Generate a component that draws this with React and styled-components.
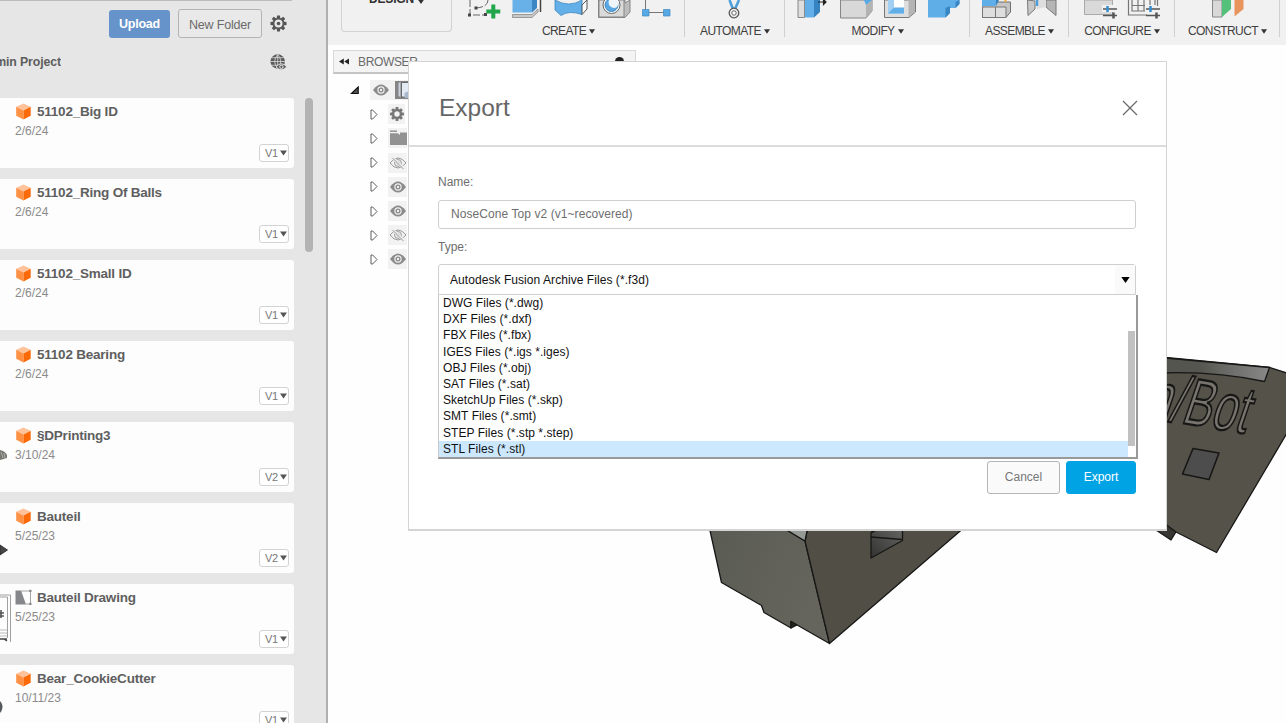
import React from "react";
import styled, { createGlobalStyle, css } from "styled-components";

const Global = createGlobalStyle`
  *, *::before, *::after { box-sizing: border-box; }
  html, body { margin: 0; padding: 0; background: #fff; overflow: hidden; }
  body { font-family: "Liberation Sans", Arial, sans-serif; font-size: 12px; }
  button, input { font-family: inherit; }
  svg { display: block; }
`;

const Screen = styled.div`
  display: flex;
  position: relative;
  width: 1286px;
  height: 723px;
  overflow: hidden;
  background: #fefefe;
`;

/* ---------- data panel ---------- */

const DataPanel = styled.aside`
  flex: none;
  width: 328px;
  height: 723px;
  overflow: hidden;
  background: #e6e6e6;
  border-right: 2px solid #b0b0b0;
`;

const TopEdge = styled.div`
  width: 292px;
  height: 1px;
  background: #bcbcbc;
`;

const PanelToolbar = styled.div`
  display: flex;
  align-items: center;
  justify-content: flex-end;
  gap: 8px;
  height: 29px;
  margin: 8px 39px 0 0;
`;

const UploadButton = styled.button`
  width: 61px;
  height: 28px;
  padding: 1px 0 0;
  border: 0;
  border-radius: 3px;
  background: #6694ca;
  color: #fff;
  font-size: 12.5px;
  font-weight: 700;
  letter-spacing: -0.25px;
`;

const FolderButton = styled.button`
  width: 84px;
  height: 29px;
  padding: 2px 0 0;
  border: 1px solid #b4b4b4;
  border-radius: 3px;
  background: #e9e9e9;
  color: #6b6b6b;
  font-size: 12.5px;
  letter-spacing: -0.2px;
`;

const ProjectRow = styled.div`
  display: flex;
  align-items: center;
  justify-content: space-between;
  height: 20px;
  margin: 14px 39px 26px 0;
`;

const ProjectName = styled.div`
  display: flex;
  justify-content: flex-end;
  width: 61px;
  overflow: hidden;
  white-space: nowrap;
  color: #5d5d5d;
  font-size: 12.3px;
  font-weight: 700;
  letter-spacing: -0.1px;
`;

const FileArea = styled.div`
  display: flex;
  gap: 11px;
`;

const FileList = styled.div`
  display: flex;
  flex-direction: column;
  gap: 11px;
  width: 294px;
`;

const PanelScroll = styled.div`
  width: 8px;
  height: 154px;
  border-radius: 4px;
  background: #b3b3b3;
`;

const Card = styled.article`
  display: flex;
  flex: none;
  height: 70px;
  border-radius: 0 3px 3px 0;
  background: #fdfdfd;
`;

const Thumb = styled.div`
  flex: none;
  width: 15px;
  height: 70px;
`;

const CardBody = styled.div`
  display: flex;
  flex: 1;
  flex-direction: column;
  padding-top: 5px;
`;

const CardTitle = styled.div`
  display: flex;
  align-items: center;
  gap: 5px;
  height: 17px;
  color: #5f5f5f;
  font-size: 13.5px;
  font-weight: 700;
  letter-spacing: -0.22px;
  white-space: nowrap;
`;

const CardDate = styled.div`
  height: 24px;
  padding-top: 4px;
  color: #8b8b8b;
  font-size: 12px;
  line-height: 14px;
`;

const Version = styled.div`
  display: flex;
  align-items: center;
  align-self: flex-end;
  gap: 2px;
  width: 30px;
  height: 18px;
  margin-right: 5px;
  padding-left: 5px;
  border: 1px solid #d3d3d3;
  border-radius: 3px;
  background: #fff;
  color: #777;
  font-size: 11px;
  letter-spacing: -0.4px;
`;

/* ---------- workspace ---------- */

const Workspace = styled.main`
  display: flex;
  flex: 1;
  flex-direction: column;
  min-width: 0;
`;

const Ribbon = styled.header`
  display: flex;
  flex: none;
  height: 45px;
  background: #f1f1f1;
`;

const DesignMenu = styled.div`
  display: flex;
  flex: none;
  justify-content: center;
  gap: 4px;
  width: 111px;
  height: 32px;
  margin-left: 13px;
  border: 1px solid #d2d2d2;
  border-top: 0;
  border-radius: 0 0 4px 4px;
  color: #333;
  font-size: 12px;
  font-weight: 700;
  line-height: 14px;
  letter-spacing: -0.2px;
`;

const DesignLabel = styled.span`
  margin-top: -8px;
`;

const Group = styled.section`
  position: relative;
  flex: none;
  width: ${(p) => p.$w}px;
  height: 45px;

  &::after {
    content: "";
    position: absolute;
    top: 0;
    right: 0;
    width: 1px;
    height: 37px;
    background: #d0d0d0;
  }
`;

const GroupLabel = styled.div`
  display: flex;
  align-items: center;
  justify-content: center;
  gap: 3px;
  height: 14px;
  margin-top: 3px;
  color: #3f3f3f;
  font-size: 12px;
  letter-spacing: -0.6px;
`;

const Canvas = styled.div`
  position: relative;
  flex: 1;
  padding: 5px 0 0 5px;
`;

const ModelView = styled.div`
  position: absolute;
  right: 0;
  bottom: 0;
`;

const BrowserBar = styled.div`
  display: flex;
  align-items: center;
  gap: 9px;
  width: 303px;
  height: 24px;
  padding: 0 11px 0 5px;
  border: 1px solid #d8d8d8;
  border-bottom: 2px solid #c4c4c4;
  background: #f4f4f4;
  color: #6a6a6a;
  font-size: 12px;
  letter-spacing: -0.35px;
`;

const BarDot = styled.span`
  width: 9px;
  height: 9px;
  margin-left: auto;
  border-radius: 50%;
  background: #222;
`;

const Tree = styled.div`
  display: flex;
  flex-direction: column;
  padding-top: 4px;
`;

const TreeRow = styled.div`
  display: flex;
  align-items: center;
  height: 24.2px;
  padding-left: ${(p) => (p.$root ? 17 : 37)}px;
`;

const Expander = styled.div`
  flex: none;
  width: ${(p) => (p.$root ? 20 : 18)}px;
`;

const IconCell = styled.div`
  display: flex;
  align-items: center;
  gap: 5px;
  height: 20px;
  padding-left: ${(p) => (p.$root ? 2 : 1)}px;
  background: #f2f2f2;
`;

/* ---------- export dialog ---------- */

const Dialog = styled.div`
  position: absolute;
  left: 408px;
  top: 61px;
  width: 759px;
  height: 470px;
  border: 1px solid #d4d4d4;
  border-width: 1px 1px 2px 1px;
  background: #fff;
`;

const DialogHeader = styled.div`
  display: flex;
  align-items: center;
  justify-content: space-between;
  height: 85px;
  padding: 9px 28px 0 30px;
  border-bottom: 2px solid #dcdcdc;
`;

const DialogTitle = styled.h1`
  margin: 0;
  color: #666;
  font-size: 24.5px;
  font-weight: 400;
  line-height: 28px;
`;

const DialogBody = styled.div`
  position: relative;
  display: flex;
  flex-direction: column;
  padding: 27px 30px 0 29px;
`;

const Label = styled.label`
  height: 16px;
  margin-bottom: ${(p) => p.$gap}px;
  color: #6e6e6e;
  font-size: 12px;
  line-height: 16px;
`;

const boxed = css`
  border: 1px solid #cfcfcf;
  border-radius: 3px;
  background: #fff;
`;

const NameInput = styled.input`
  ${boxed}
  height: 29px;
  margin-bottom: 10px;
  padding: 0 12px 1px;
  outline: 0;
  color: #6e6e6e;
  font-size: 12px;
  letter-spacing: 0.07px;
`;

const Select = styled.div`
  ${boxed}
  display: flex;
  align-items: stretch;
  justify-content: space-between;
  height: 31px;
  padding-left: 11px;
  border-radius: 3px 3px 0 0;
  color: #111;
  font-size: 12px;
  line-height: 30px;
  letter-spacing: 0.06px;
`;

const SelectArrow = styled.div`
  display: flex;
  align-items: center;
  justify-content: center;
  width: 20px;
  background: #fafafa;
`;

const Options = styled.div`
  position: absolute;
  left: 29px;
  top: 148px;
  display: flex;
  width: 700px;
  height: 164px;
  border: 1px solid #c9c9c9;
  border-top: 0;
  border-right: 2px solid #999;
  border-bottom: 2px solid #999;
  background: #fff;
`;

const OptionList = styled.div`
  flex: 1;
`;

const Option = styled.div`
  height: 16.2px;
  padding-left: 4px;
  background: ${(p) => (p.$active ? "#cce8ff" : "transparent")};
  color: #111;
  font-size: 12px;
  line-height: 16px;
  letter-spacing: 0.05px;
`;

const OptionsScroll = styled.div`
  width: 7px;
  height: 115px;
  margin: 36px 1px 0 0;
  background: #c1c1c1;
`;

const Actions = styled.div`
  display: flex;
  justify-content: flex-end;
  gap: 6px;
  margin-top: 166px;
`;

const Button = styled.button`
  width: ${(p) => (p.$primary ? 70 : 73)}px;
  height: 33px;
  padding: 0 0 1px;
  border: 1px solid ${(p) => (p.$primary ? "#00a3e4" : "#b5b5b5")};
  border-radius: 3px;
  background: ${(p) => (p.$primary ? "#00a3e4" : "#fafafa")};
  color: ${(p) => (p.$primary ? "#fff" : "#777")};
  font-size: 12px;
`;

/* ---------- icons ---------- */

const Caret = ({ w = 7, h = 5, color = "#333" }) => (
  <svg width={w} height={h} viewBox="0 0 7 5">
    <path d="M0 0H7L3.5 5Z" fill={color} />
  </svg>
);

const Gear = ({ size, color = "#555" }) => (
  <svg width={size} height={size} viewBox="-9 -9 18 18">
    <g fill={color}>
      {[0, 45, 90, 135, 180, 225, 270, 315].map((a) => (
        <path key={a} d="M-2 -5L-1.5 -8.5H1.5L2 -5Z" transform={`rotate(${a})`} />
      ))}
    </g>
    <circle r="5.2" fill="none" stroke={color} strokeWidth="1.8" />
    <circle r="1.9" fill={color} />
  </svg>
);

const Cog = () => (
  <svg width="16" height="16" viewBox="-8 -8 16 16">
    <g fill="#777">
      {[0, 45, 90, 135, 180, 225, 270, 315].map((a) => (
        <path key={a} d="M-1.7 -4L-1.3 -7H1.3L1.7 -4Z" transform={`rotate(${a})`} />
      ))}
    </g>
    <circle r="3.9" fill="none" stroke="#777" strokeWidth="2.4" />
  </svg>
);

const GlobeEye = () => (
  <svg width="17" height="17" viewBox="0 0 17 17">
    <circle cx="7.7" cy="7.5" r="7.2" fill="#5c5c5c" />
    <path
      d="M7.7 .5V14.5M.5 7.5H15M2 3.7H13.5M2 11.3H13.5M7.7 .5Q1.6 7.5 7.7 14.5M7.7 .5Q13.8 7.5 7.7 14.5"
      fill="none"
      stroke="#d9d9d9"
      strokeWidth=".8"
    />
    <path d="M6 12.8Q11.4 6.8 16.8 12.8Q11.4 18.8 6 12.8Z" fill="#5c5c5c" stroke="#e6e6e6" strokeWidth=".9" />
    <circle cx="11.4" cy="12.8" r="1.7" fill="#5c5c5c" stroke="#eee" strokeWidth="1" />
  </svg>
);

const Cube = () => (
  <svg width="17" height="17" viewBox="0 0 17 17">
    <path d="M8.500 .5L15.700 3.800L8.500 7.400L1.200 3.800Z" fill="#ffc29b" />
    <path d="M1.200 3.800L8.500 7.400V16.500L1.200 12.800Z" fill="#ff9145" />
    <path d="M15.700 3.800L8.500 7.400V16.500L15.700 12.800Z" fill="#fb6a06" />
  </svg>
);

const DrawingIcon = () => (
  <svg width="17" height="17" viewBox="0 0 17 17">
    <path d="M.5 1.5H6L11 15.5H.5Z" fill="#85878a" />
    <path d="M6 2H15.5V15H11" fill="none" stroke="#999" strokeWidth=".9" />
    <path d="M14.3 .8H16.5V3H14.3ZM14.3 13.8H16.5V16H14.3Z" fill="#888" />
  </svg>
);

const Eye = ({ off }) => (
  <svg width="18" height="14" viewBox="0 0 18 14">
    {off ? (
      <g fill="none" stroke="#999" strokeWidth="1">
        <path d="M1 7Q9 -3 17 7Q9 17 1 7Z" />
        <circle cx="9" cy="7" r="3.4" />
        <circle cx="9" cy="7" r="1.2" />
        <path d="M3.500 1.500L14.500 12.500" stroke="#f2f2f2" strokeWidth="2.400" />
        <path d="M3.500 2L14.500 13" />
      </g>
    ) : (
      <g>
        <path d="M1 7Q9 -4 17 7Q9 18 1 7Z" fill="#8b8b8b" />
        <circle cx="9" cy="7" r="3.1" fill="#8b8b8b" stroke="#eee" strokeWidth="1.2" />
        <circle cx="9" cy="7" r="1.2" fill="#eee" />
      </g>
    )}
  </svg>
);

const Folder = () => (
  <svg width="18" height="16" viewBox="0 0 18 16">
    <path d="M1 1.200H8" stroke="#929292" strokeWidth="1.500" />
    <path d="M1 3.200H9L11 5V2.500H18V15H1Z" fill="#929292" />
  </svg>
);

const RootPart = () => (
  <svg width="18" height="18" viewBox="0 0 18 18">
    <rect width="18" height="18" fill="#858585" />
    <path d="M3.500 2L5.500 1V16L3.500 15Z" fill="#c9d2de" />
    <path d="M6.500 1.500H18V16H6.500Z" fill="#e4eaf3" stroke="#555" strokeWidth=".8" />
    <path d="M9.500 17V12L18 8V17Z" fill="#a9b7cc" />
  </svg>
);

const ClosedArrow = () => (
  <svg width="8" height="11" viewBox="0 0 8 11">
    <path d="M1 1H2.600L7 5.500L2.600 10H1Z" fill="#fff" stroke="#5c5c5c" />
  </svg>
);

const OpenArrow = () => (
  <svg width="10" height="9" viewBox="0 0 10 9">
    <path d="M1.500 7.500L8.200 1V7.500Z" fill="#555" stroke="#111" strokeWidth="1.200" />
  </svg>
);

const Collapse = () => (
  <svg width="10" height="7" viewBox="0 0 10 7">
    <path d="M4.800 .5V6.500L0 3.500ZM10 .5V6.500L5.200 3.500Z" fill="#222" />
  </svg>
);

const CreateIcons = () => (
  <g>
    <path d="M470 0V15H486M476 8Q488 7 488 0" fill="none" stroke="#666" strokeDasharray="7 2" />
    <path d="M468 13.500h3v3h-3zM474.500 6.500h3v3h-3zM484 13h3v3h-3z" fill="#444" />
    <path d="M491.300 4.500h4v5h5v4h-5v5h-4v-5h-5v-4h5z" fill="#21a64b" />
    <path d="M512.500 0H532V12.500H512.500Z" fill="#68b1e8" />
    <path d="M532 0H537V8L532 12.500Z" fill="#3d86c4" />
    <path d="M512.500 14.500H532L538 9V12L532 17.500H512.500Z" fill="#c9c9c9" stroke="#888" strokeWidth=".8" />
    <path d="M540.500 0V12" stroke="#444" strokeWidth="1.500" />
    <path d="M555 0Q569 8 582 0V14.500Q569 10 561 15.500L555 10Z" fill="#63afe8" stroke="#3e88c0" strokeWidth=".8" />
    <path d="M582 5L587 0V9L582 14.500Z" fill="#fafafa" stroke="#555" />
    <path d="M598.500 0H625V3L630 0V12L625 17.500H598.500Z" fill="#bdbdbd" stroke="#858585" />
    <path d="M599 0H624V17H599Z" fill="#dadada" stroke="#858585" />
    <circle cx="611.500" cy="5" r="8.500" fill="#fff" stroke="#666" />
    <circle cx="611.500" cy="5" r="6.500" fill="#5ba9e4" stroke="#3c86be" />
    <path d="M611 -2A5 5 0 0 0 617 7Q620 2 617 -2Z" fill="#eef5fb" />
    <path d="M645.500 0V12.500H666" fill="none" stroke="#777" />
    <path d="M642.500 9.500h6.500v6.500h-6.500zM663.500 9.500h6.500v6.500h-6.500z" fill="#58a9e4" stroke="#3e8bc4" strokeWidth=".7" />
  </g>
);

const AutomateIcons = () => (
  <g>
    <path d="M729.500 0L733 9M739 0L735 9" stroke="#4f9fdb" strokeWidth="2.600" />
    <circle cx="734" cy="13" r="4.800" fill="#eee" stroke="#555" strokeWidth="1.300" />
    <circle cx="734" cy="13" r="2.200" fill="#fff" stroke="#666" />
  </g>
);

const ModifyIcons = () => (
  <g>
    <path d="M798 0H804.500V17.500H798Z" fill="#ddd" stroke="#888" />
    <path d="M805 0H814V17.500H805Z" fill="#62aee8" />
    <path d="M814 0H820V12L814 17.500Z" fill="#3683c1" />
    <path d="M818 2H825M823.500 -.5L826 2L823.500 4.500Z" stroke="#222" fill="#222" strokeWidth="1.200" />
    <path d="M840.500 0H872V11L866 18H840.500Z" fill="#d8d8d8" stroke="#858585" />
    <path d="M866 18V5L872 0V11Z" fill="#b2b2b2" />
    <path d="M864 0H872L866 5Z" fill="#58a8e4" />
    <path d="M884.500 0H915.500V12L909 17.500H884.500Z" fill="#dedede" stroke="#777" />
    <path d="M908.500 0H915V12L908.500 17.500Z" fill="#b4b4b4" />
    <path d="M888 0H904V13.500H888Z" fill="#a1d0f3" />
    <path d="M894 0H904V8H894Z" fill="#fff" />
    <path d="M888 13.500L894 7.500H904V13.500Z" fill="#61afe8" />
    <path d="M928 0H959.500V4L955.500 8H950V13L945.500 17.500H928Z" fill="#5faee8" />
    <path d="M945.500 17.500V8L950 6V13ZM955.500 8V2L959.500 0V4Z" fill="#3986c4" />
  </g>
);

const AssembleIcons = () => (
  <g>
    <path d="M982.500 7L987 2H1010.500V12L1006 17.500H982.500Z" fill="#c5c5c5" stroke="#707070" />
    <path d="M982.500 7H995.500V17.500H982.500ZM995.500 7H1006V17.500H995.500Z" fill="#dedede" stroke="#777" />
    <path d="M982 0H996V6H982Z" fill="#5faee7" />
    <path d="M996 0H999L996 6Z" fill="#3680bc" />
    <path d="M1004.500 0h2v2h-2z" fill="#efaa36" />
    <path d="M1027.500 0L1035 1V9L1028 15.500Z" fill="#c8c8c8" stroke="#777" />
    <path d="M1048 0H1056V15.500L1046 7V0Z" fill="#b5b5b5" stroke="#777" />
    <path d="M1035 0H1046V7L1037 9Z" fill="#dedede" />
    <path d="M1037 0V6" stroke="#4d9dda" strokeWidth="2.500" />
  </g>
);

const Sliders = ({ x }) => (
  <g transform={`translate(${x} 0)`} fill="none">
    <path d="M-2 5H10V12H-2Z" fill="#f1f1f1" />
    <path d="M-1 9H13M-1 15.500H13" stroke="#555" strokeWidth="1.500" />
    <path d="M3.500 6V12" stroke="#338ed2" strokeWidth="2.500" />
    <path d="M9.500 12.500V18.500" stroke="#555" strokeWidth="2.500" />
  </g>
);

const ConfigureIcons = () => (
  <g>
    <path d="M1084.500 0H1112.500V14.500H1084.500Z" fill="#d9d9d9" stroke="#aaa" />
    <Sliders x={1104} />
    <path
      d="M1128.500 0V15H1147M1157.500 0V6M1132 0V11H1146M1132 5.500H1155M1138 0V11M1144 0V11M1150 0V6M1155 0V6"
      fill="none"
      stroke="#777"
      strokeWidth="1.200"
    />
    <Sliders x={1147} />
  </g>
);

const ConstructIcons = () => (
  <g>
    <path d="M1212.500 0H1222V17H1212.500Z" fill="#d8d8d8" stroke="#888" />
    <path d="M1222 0H1231V9L1222 17Z" fill="#54c17b" />
    <path d="M1234.500 0H1243.500V9L1234.500 16.500Z" fill="#e9935d" />
  </g>
);

const engraving = {
  fontFamily: "Liberation Sans, sans-serif",
  fontSize: 64,
  transform: "matrix(.675 .11 -.34 1 1144 417)",
};

const Model = () => (
  <svg width="600" height="390" viewBox="686 333 600 390">
    <defs>
      <linearGradient id="band" x1="0" x2="1">
        <stop offset="0" stopColor="#55554f" />
        <stop offset=".35" stopColor="#55554f" />
        <stop offset="1" stopColor="#898989" />
      </linearGradient>
      <linearGradient id="left" x1="0" x2="1" y2=".4">
        <stop offset="0" stopColor="#5a5b53" />
        <stop offset="1" stopColor="#65655e" />
      </linearGradient>
      <linearGradient id="hole" x1="0" x2="1" y1="1" y2="0">
        <stop offset="0" stopColor="#333332" />
        <stop offset="1" stopColor="#666664" />
      </linearGradient>
    </defs>
    <g stroke="#171716" strokeWidth="1.300" strokeLinejoin="round">
      <path d="M1150 526L1171 540L1176.500 531L1167 523Z" fill="#373632" />
      <path d="M1160 357L1270 367.500L1290 374V428L1216.500 552.500L1176 532L1160 520Z" fill="#55524a" />
      <path d="M1160 357.500L1269.500 367.500L1264.500 381.500Q1215 371 1160 373Z" fill="url(#band)" />
      <path d="M1193 448.500L1219 453L1209 479.500L1182.500 474Z" fill="#4c4d4c" strokeWidth="1.600" />
      <path d="M709 526L721.500 582.500L761.500 605.500L764 612.500L791 628V621.500L829.500 643.500L805 541L780 526Z" fill="url(#left)" />
      <path d="M805 541L808 526H966L829.500 643.500Z" fill="#514e46" />
      <path d="M780 526H808L805 541Z" fill="#969a96" />
      <path d="M791 621.500L797 625L791 628Z" fill="#222" />
      <path d="M871 533L877 526H902.500V540.500L871 558Z" fill="url(#hole)" />
      <path d="M871 537L902 539.500M871 533L880 528" fill="none" />
    </g>
    <text {...engraving} fill="#77756e" stroke="#171716" strokeWidth="2.200">
      n/Bot
    </text>
  </svg>
);

const Thumbnail = ({ kind }) => (
  <svg width="15" height="70" viewBox="0 0 15 70">
    {kind === "printing" && (
      <g>
        <path d="M0 28Q5 29 7 33V36L0 38Z" fill="#77776f" />
        <path d="M1 30L3 36M4 31L5 36" stroke="#bbb" strokeWidth=".8" />
      </g>
    )}
    {kind === "plate" && <path d="M0 42L7.500 47L0 52Z" fill="#464646" stroke="#222" strokeWidth=".8" />}
    {kind === "sheet" && (
      <g fill="none" stroke="#888">
        <path d="M0 11H10.500V58M0 13H7.500V54" strokeWidth=".8" />
        <path d="M0 29H4M1 26V34M0 32H4" stroke="#555" strokeWidth="1.600" />
        <path d="M0 46H7M0 49H7M0 52H7" stroke="#bbb" />
        <path d="M0 55H7M4 55L7 57" stroke="#444" strokeWidth="1.500" />
      </g>
    )}
    {kind === "bear" && <path d="M0 36Q4 40 1.500 46L0 48Z" fill="#55585c" />}
  </svg>
);

/* ---------- data ---------- */

const files = [
  { name: "51102_Big ID", date: "2/6/24", version: "V1" },
  { name: "51102_Ring Of Balls", date: "2/6/24", version: "V1" },
  { name: "51102_Small ID", date: "2/6/24", version: "V1" },
  { name: "51102 Bearing", date: "2/6/24", version: "V1" },
  { name: "§DPrinting3", date: "3/10/24", version: "V2", thumb: "printing" },
  { name: "Bauteil", date: "5/25/23", version: "V2", thumb: "plate" },
  { name: "Bauteil Drawing", date: "5/25/23", version: "V1", thumb: "sheet", drawing: true },
  { name: "Bear_CookieCutter", date: "10/11/23", version: "V1", thumb: "bear" },
];

const groups = [
  { label: "CREATE", x: 452, w: 233, Icons: CreateIcons },
  { label: "AUTOMATE", x: 685, w: 100, Icons: AutomateIcons },
  { label: "MODIFY", x: 785, w: 185, Icons: ModifyIcons },
  { label: "ASSEMBLE", x: 970, w: 99, Icons: AssembleIcons },
  { label: "CONFIGURE", x: 1069, w: 106, Icons: ConfigureIcons },
  { label: "CONSTRUCT", x: 1175, w: 105, Icons: ConstructIcons },
];

const treeIcons = [
  <Cog />,
  <Folder />,
  <Eye off />,
  <Eye />,
  <Eye />,
  <Eye off />,
  <Eye />,
];

const formats = [
  "DWG Files (*.dwg)",
  "DXF Files (*.dxf)",
  "FBX Files (*.fbx)",
  "IGES Files (*.igs *.iges)",
  "OBJ Files (*.obj)",
  "SAT Files (*.sat)",
  "SketchUp Files (*.skp)",
  "SMT Files (*.smt)",
  "STEP Files (*.stp *.step)",
  "STL Files (*.stl)",
];

export default function App() {
  return (
    <Screen>
      <Global />
      <DataPanel>
        <TopEdge />
        <PanelToolbar>
          <UploadButton>Upload</UploadButton>
          <FolderButton>New Folder</FolderButton>
          <Gear size={17} />
        </PanelToolbar>
        <ProjectRow>
          <ProjectName>min Project</ProjectName>
          <GlobeEye />
        </ProjectRow>
        <FileArea>
          <FileList>
            {files.map((f) => (
              <Card key={f.name}>
                <Thumb>
                  <Thumbnail kind={f.thumb} />
                </Thumb>
                <CardBody>
                  <CardTitle>
                    {f.drawing ? <DrawingIcon /> : <Cube />}
                    {f.name}
                  </CardTitle>
                  <CardDate>{f.date}</CardDate>
                  <Version>
                    {f.version}
                    <Caret color="#555" h={6} />
                  </Version>
                </CardBody>
              </Card>
            ))}
          </FileList>
          <PanelScroll />
        </FileArea>
      </DataPanel>

      <Workspace>
        <Ribbon>
          <DesignMenu>
            <DesignLabel>DESIGN</DesignLabel>
            <Caret w={6} h={4} />
          </DesignMenu>
          {groups.map(({ label, x, w, Icons }) => (
            <Group key={label} $w={w}>
              <svg width={w} height="21" viewBox={`${x} 0 ${w} 21`}>
                <Icons />
              </svg>
              <GroupLabel>
                {label}
                <Caret w={6} h={5} />
              </GroupLabel>
            </Group>
          ))}
        </Ribbon>
        <Canvas>
          <ModelView>
            <Model />
          </ModelView>
          <BrowserBar>
            <Collapse />
            BROWSER
            <BarDot />
          </BrowserBar>
          <Tree>
            <TreeRow $root>
              <Expander $root>
                <OpenArrow />
              </Expander>
              <IconCell $root>
                <Eye />
                <RootPart />
              </IconCell>
            </TreeRow>
            {treeIcons.map((icon, i) => (
              <TreeRow key={i}>
                <Expander>
                  <ClosedArrow />
                </Expander>
                <IconCell>{icon}</IconCell>
              </TreeRow>
            ))}
          </Tree>
        </Canvas>
      </Workspace>

      <Dialog>
        <DialogHeader>
          <DialogTitle>Export</DialogTitle>
          <svg width="16" height="16" viewBox="0 0 16 16">
            <path d="M1 1L15 15M15 1L1 15" stroke="#6a6a6a" strokeWidth="1.300" />
          </svg>
        </DialogHeader>
        <DialogBody>
          <Label $gap={10}>Name:</Label>
          <NameInput defaultValue="NoseCone Top v2 (v1~recovered)" />
          <Label $gap={9}>Type:</Label>
          <Select>
            Autodesk Fusion Archive Files (*.f3d)
            <SelectArrow>
              <Caret w={9} h={6} color="#000" />
            </SelectArrow>
          </Select>
          <Actions>
            <Button>Cancel</Button>
            <Button $primary>Export</Button>
          </Actions>
          <Options>
            <OptionList>
              {formats.map((f) => (
                <Option key={f} $active={f.startsWith("STL")}>
                  {f}
                </Option>
              ))}
            </OptionList>
            <OptionsScroll />
          </Options>
        </DialogBody>
      </Dialog>
    </Screen>
  );
}
